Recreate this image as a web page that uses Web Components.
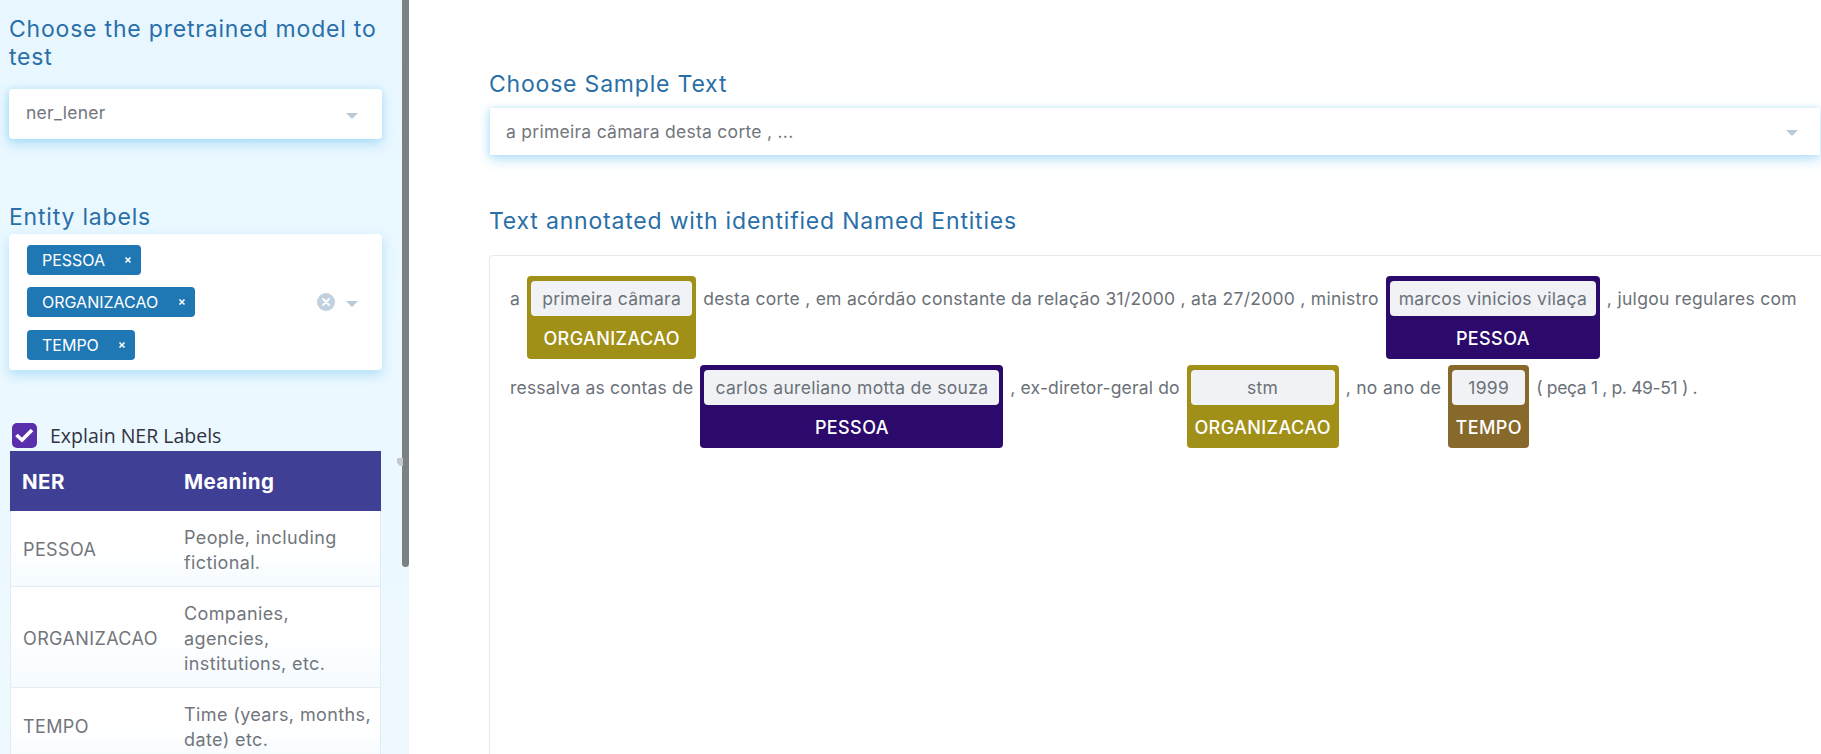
<!DOCTYPE html>
<html>
<head>
<meta charset="utf-8">
<title>NER</title>
<style>
  html, body { margin: 0; height: 100%; overflow: hidden; background: #fff; }
  body { font-family: Inter, "Liberation Sans", sans-serif; color: #646a72; }
  #app { display: flex; height: 754px; width: 1821px; overflow: hidden; }
</style>
</head>
<body>
<div id="app">
  <side-bar>
    <sec-title style="margin-bottom:18px">Choose the pretrained model to test</sec-title>
    <select-box value="ner_lener" style="margin-bottom:64px"></select-box>
    <sec-title style="margin-bottom:3px">Entity labels</sec-title>
    <multi-select style="margin-bottom:53px">
      <tag-chip width="114">PESSOA</tag-chip>
      <tag-chip width="168">ORGANIZACAO</tag-chip>
      <tag-chip width="108">TEMPO</tag-chip>
    </multi-select>
    <check-row>Explain NER Labels</check-row>
    <ner-table>
      <ner-row name="PESSOA" height="76">People, including<br>fictional.</ner-row>
      <ner-row name="ORGANIZACAO" height="101">Companies,<br>agencies,<br>institutions, etc.</ner-row>
      <ner-row name="TEMPO" height="76">Time (years, months,<br>date) etc.</ner-row>
    </ner-table>
  </side-bar>
  <main-pane>
    <sec-title style="margin-bottom:10px">Choose Sample Text</sec-title>
    <select-box wide value="a primeira câmara desta corte , ..." style="margin-bottom:52px"></select-box>
    <sec-title style="margin-bottom:20px">Text annotated with identified Named Entities</sec-title>
    <anno-box>
      <anno-line>
        <span>a</span>
        <ner-ent label="ORGANIZACAO" color="#a09018" width="169">primeira câmara</ner-ent>
        <span style="letter-spacing:.27px">desta corte , em acórdão constante da relação 31/2000 , ata 27/2000 , ministro</span>
        <ner-ent label="PESSOA" color="#2b0a6b" width="214">marcos vinicios vilaça</ner-ent>
        <span>, julgou regulares com</span>
      </anno-line>
      <anno-line>
        <span style="letter-spacing:.2px">ressalva as contas de</span>
        <ner-ent label="PESSOA" color="#2b0a6b" width="303">carlos aureliano motta de souza</ner-ent>
        <span style="letter-spacing:.15px">, ex-diretor-geral do</span>
        <ner-ent label="ORGANIZACAO" color="#a09018" width="152">stm</ner-ent>
        <span>, no ano de</span>
        <ner-ent label="TEMPO" color="#86692b" width="81">1999</ner-ent>
        <span style="letter-spacing:-.35px">( peça 1 , p. 49-51 ) .</span>
      </anno-line>
    </anno-box>
  </main-pane>
</div>

<script>
  const FONT = 'Inter, "Liberation Sans", sans-serif';

  const caret = `<svg width="14" height="8" viewBox="0 0 14 8"><path d="M1 1h12L7 7z" fill="#b9c9d6"/></svg>`;

  class BaseEl extends HTMLElement {
    render(html) {
      this.attachShadow({mode: 'open'}).innerHTML = html;
    }
  }

  class SideBar extends BaseEl {
    constructor() {
      super();
      this.render(`
        <style>
          :host {
            display: block;
            position: relative;
            flex: 0 0 409px;
            height: 754px;
            overflow: hidden;
            box-sizing: border-box;
            background: linear-gradient(#e8f7ff, #eef9ff);
          }
          #content { padding: 15px 27px 0 9px; width: 373px; }
          #thumb {
            position: absolute;
            left: 402px; top: 0;
            width: 7px; height: 567px;
            background: #7c8184;
            border-radius: 0 0 4px 4px;
          }
          #collapse { position: absolute; left: 397px; top: 458px; display: block; }
        </style>
        <div id="content"><slot></slot></div>
        <div id="thumb"></div>
        <svg id="collapse" width="6" height="8" viewBox="0 0 6 8"><path d="M0 0H6V8H3L0 5Z" fill="#c5c9cd"/></svg>
      `);
    }
  }

  class MainPane extends BaseEl {
    constructor() {
      super();
      this.render(`
        <style>
          :host {
            display: block;
            flex: 1;
            height: 754px;
            overflow: hidden;
            box-sizing: border-box;
            padding: 70px 0 0 80px;
            min-width: 0;
          }
        </style>
        <slot></slot>
      `);
    }
  }

  class SecTitle extends BaseEl {
    constructor() {
      super();
      this.render(`
        <style>
          :host {
            display: block;
            font: 400 23px/28px ${FONT};
            letter-spacing: .8px;
            color: #2a6fa8;
          }
        </style>
        <slot></slot>
      `);
    }
  }

  class SelectBox extends BaseEl {
    constructor() {
      super();
      const wide = this.hasAttribute('wide');
      this.render(`
        <style>
          :host {
            display: flex;
            align-items: center;
            justify-content: space-between;
            box-sizing: border-box;
            height: ${wide ? 47 : 50}px;
            ${wide ? 'margin: 0 1px;' : ''}
            padding: 0 ${wide ? 21 : 23}px 0 ${wide ? 16 : 17}px;
            background: #fff;
            border-radius: ${wide ? 0 : 4}px;
            box-shadow: 0 5px 12px rgba(110, 195, 240, .45), -1px 0 6px rgba(110, 195, 240, .3);
            font: 400 17.5px ${FONT};
            letter-spacing: .27px;
            color: #72767c;
          }
          span { padding-bottom: ${wide ? 1 : 3}px; }
          svg { display: block; margin-top: 3px; }
        </style>
        <span>${this.getAttribute('value')}</span>
        ${caret}
      `);
    }
  }

  class MultiSelect extends BaseEl {
    constructor() {
      super();
      this.render(`
        <style>
          :host {
            display: flex;
            align-items: center;
            box-sizing: border-box;
            height: 136px;
            padding: 0 23px 0 18px;
            background: #fff;
            border-radius: 4px;
            box-shadow: 0 5px 12px rgba(110, 195, 240, .45);
          }
          #tags { flex: 1; display: flex; flex-direction: column; align-items: flex-start; gap: 12.5px; }
          #clear {
            width: 18px; height: 18px;
            border-radius: 50%;
            background: #c1d2de;
            margin-right: 10px;
          }
          #clear svg, #arrow { display: block; }
        </style>
        <div id="tags"><slot></slot></div>
        <div id="clear">
          <svg width="18" height="18" viewBox="0 0 18 18"><path d="M6 6l6 6M12 6l-6 6" stroke="#fff" stroke-width="2" stroke-linecap="round"/></svg>
        </div>
        <div id="arrow">${caret}</div>
      `);
    }
  }

  class TagChip extends BaseEl {
    constructor() {
      super();
      this.render(`
        <style>
          :host {
            display: flex;
            align-items: center;
            justify-content: space-between;
            box-sizing: border-box;
            width: ${this.getAttribute('width')}px;
            height: 30px;
            padding: 0 9px 0 15px;
            background: #1f77b4;
            border-radius: 4px;
            font: 400 16px ${FONT};
            color: #fff;
          }
          svg { display: block; }
        </style>
        <span><slot></slot></span>
        <svg width="8" height="8" viewBox="0 0 8 8"><path d="M1.5 1.5l5 5M6.5 1.5l-5 5" stroke="#fff" stroke-width="1.6"/></svg>
      `);
    }
  }

  class CheckRow extends BaseEl {
    constructor() {
      super();
      this.render(`
        <style>
          :host {
            display: flex;
            align-items: center;
            gap: 13px;
            margin-left: 3px;
            height: 25px;
            font: 400 19.5px "Open Sans", sans-serif;
            color: #31333f;
          }
          #box {
            width: 25px; height: 25px;
            background: #5a2fac;
            border-radius: 5px;
          }
          svg { display: block; }
        </style>
        <div id="box">
          <svg width="25" height="25" viewBox="0 0 25 25"><path d="M4.5 12l5.5 5 10-10" fill="none" stroke="#fff" stroke-width="3.6"/></svg>
        </div>
        <span><slot></slot></span>
      `);
    }
  }

  class NerTable extends BaseEl {
    constructor() {
      super();
      this.render(`
        <style>
          :host { display: block; margin: 3px 0 0 1px; width: 371px; }
          #head {
            display: flex;
            align-items: center;
            height: 60px;
            background: #3f3f95;
            color: #fff;
            font: 700 20.5px ${FONT};
            letter-spacing: .4px;
          }
          #head span:first-child { width: 174px; padding-left: 12px; box-sizing: border-box; }
        </style>
        <div id="head"><span>NER</span><span>Meaning</span></div>
        <slot></slot>
      `);
    }
  }

  class NerRow extends BaseEl {
    constructor() {
      super();
      this.render(`
        <style>
          :host {
            display: flex;
            align-items: center;
            box-sizing: border-box;
            height: ${this.getAttribute('height')}px;
            padding-top: 2px;
            background: linear-gradient(#fff 50%, #f5fbff);
            border: 1px solid #e4ebf1;
            border-top: 0;
            font: 400 18px/25px ${FONT};
            letter-spacing: .38px;
            color: #72767c;
          }
          #name { flex: 0 0 173px; padding-left: 12px; box-sizing: border-box; }
          #mean { flex: 1; }
        </style>
        <div id="name">${this.getAttribute('name')}</div>
        <div id="mean"><slot></slot></div>
      `);
    }
  }

  class AnnoBox extends BaseEl {
    constructor() {
      super();
      this.render(`
        <style>
          :host {
            display: block;
            box-sizing: border-box;
            height: 520px;
            padding: 20px 0 0 20px;
            border: 1px solid #e6eaf1;
            border-right: 0;
            border-radius: 4px 0 0 0;
            font: 400 17.5px ${FONT};
            letter-spacing: .3px;
            color: #6b7178;
          }
        </style>
        <slot></slot>
      `);
    }
  }

  class AnnoLine extends BaseEl {
    constructor() {
      super();
      this.render(`
        <style>
          :host { display: flex; align-items: flex-start; gap: 7px; margin-bottom: 6px; line-height: 46px; white-space: nowrap; }
        </style>
        <slot></slot>
      `);
    }
  }

  class NerEnt extends BaseEl {
    constructor() {
      super();
      this.render(`
        <style>
          :host {
            display: block;
            box-sizing: border-box;
            width: ${this.getAttribute('width')}px;
            height: 83px;
            padding: 5px 4px 0;
            background: ${this.getAttribute('color')};
            border-radius: 4px;
            flex: none;
          }
          #txt {
            height: 35px;
            line-height: 36px;
            text-align: center;
            background: #f0f2f6;
            border-radius: 4px;
          }
          #lab {
            height: 43px;
            line-height: 46px;
            text-align: center;
            color: #fff;
            font-weight: 500;
            font-size: 18px;
            letter-spacing: .4px;
          }
        </style>
        <div id="txt"><slot></slot></div>
        <div id="lab">${this.getAttribute('label')}</div>
      `);
    }
  }

  customElements.define('side-bar', SideBar);
  customElements.define('main-pane', MainPane);
  customElements.define('sec-title', SecTitle);
  customElements.define('select-box', SelectBox);
  customElements.define('multi-select', MultiSelect);
  customElements.define('tag-chip', TagChip);
  customElements.define('check-row', CheckRow);
  customElements.define('ner-table', NerTable);
  customElements.define('ner-row', NerRow);
  customElements.define('anno-box', AnnoBox);
  customElements.define('anno-line', AnnoLine);
  customElements.define('ner-ent', NerEnt);
</script>
</body>
</html>
